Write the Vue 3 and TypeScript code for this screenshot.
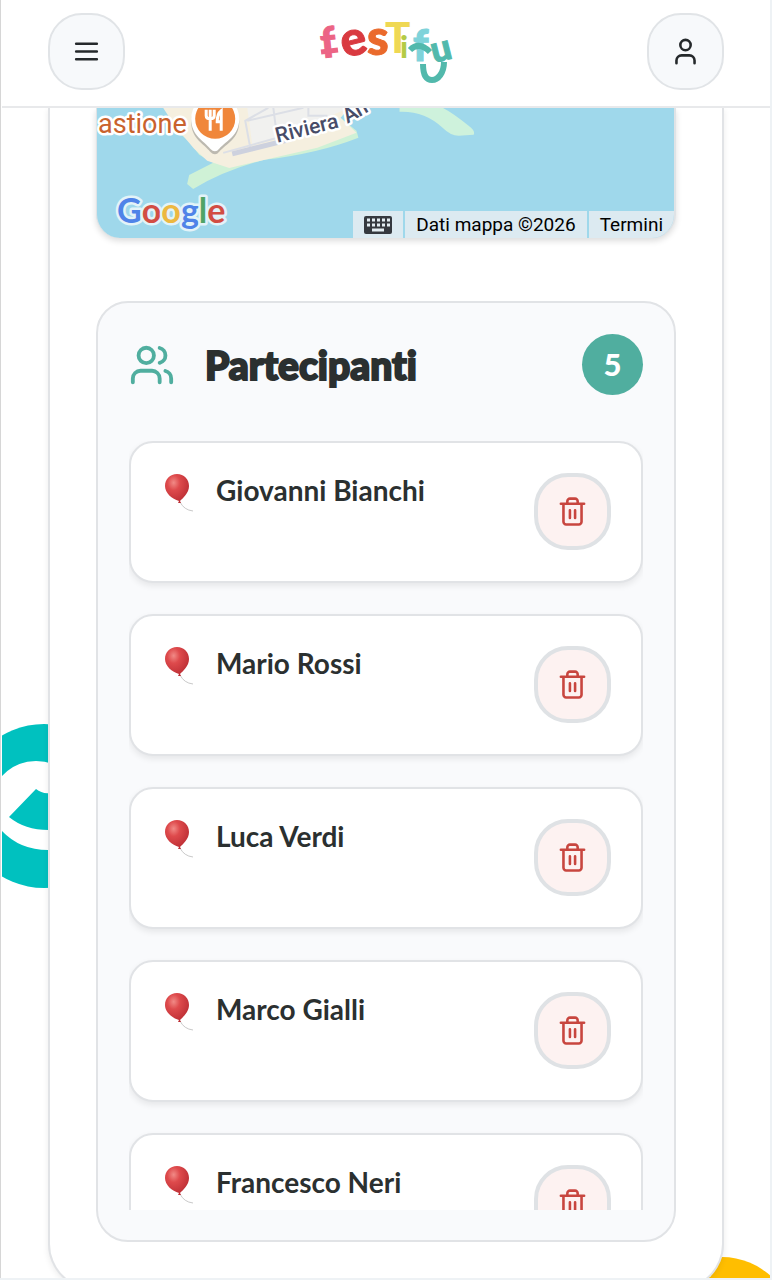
<script setup lang="ts">
import { ref } from 'vue'

interface Participant {
  id: number
  name: string
}

const participants = ref<Participant[]>([
  { id: 1, name: 'Giovanni Bianchi' },
  { id: 2, name: 'Mario Rossi' },
  { id: 3, name: 'Luca Verdi' },
  { id: 4, name: 'Marco Gialli' },
  { id: 5, name: 'Francesco Neri' },
])

function remove(id: number): void {
  participants.value = participants.value.filter((p) => p.id !== id)
}
</script>

<template>
  <div class="page">
    <header class="topbar">
      <button class="round-button" type="button" aria-label="Menu">
        <svg class="icon" viewBox="0 0 24 24"><path d="M4 6h16M4 12h16M4 18h16" /></svg>
      </button>
      <a class="logo" href="#" aria-label="Festify">
        <svg viewBox="0 0 136 66" width="136" height="66">
          <g class="logo-letters">
            <text x="3" y="38" font-size="42" fill="#ec6485" stroke="#ec6485" transform="rotate(-6 12 28)">f</text>
            <path d="M3 33L20 31" stroke="#ec6485" stroke-width="5" />
            <text x="23" y="36" font-size="48" fill="#d93a40" stroke="#d93a40" transform="rotate(-14 37 24)">e</text>
            <text x="49" y="36" font-size="49" fill="#ea6a2c" stroke="#ea6a2c">s</text>
            <text x="67" y="34" font-size="42" fill="#efd853">T</text>
            <text x="82" y="39" font-size="31" fill="#b4cb46">i</text>
            <text x="95" y="42" font-size="43" fill="#7fd3da" stroke="#7fd3da">f</text>
            <text x="113" y="42" font-size="36" fill="#52b9ac" stroke="#52b9ac" transform="rotate(-14 123 32)">u</text>
          </g>
          <path d="M92 31Q101 22 112 33" fill="none" stroke="#52b9ac" stroke-width="6" />
          <path d="M105 45c0 10 3 16 9 16s12-7 12-18" fill="none" stroke="#52b9ac" stroke-width="6" />
        </svg>
      </a>
      <button class="round-button" type="button" aria-label="Profilo">
        <svg class="icon" viewBox="0 0 24 24">
          <path d="M19 21v-2a4 4 0 0 0-4-4H9a4 4 0 0 0-4 4v2" />
          <circle cx="12" cy="7" r="4" />
        </svg>
      </button>
    </header>

    <main class="content">
      <svg class="decor decor-teal" viewBox="0 0 124 164" width="124" height="164" aria-hidden="true">
        <circle cx="42" cy="82" r="82" fill="#00c1bf" />
        <path d="M0 52Q14 37 34 37Q58 37 80 60V126H46Q18 126 0 107Z" fill="#fff" />
        <path d="M34 65L7 93Q24 107 50 106H70V69H48Q40 70 34 65Z" fill="#00c1bf" />
      </svg>
      <svg class="decor decor-yellow" viewBox="0 0 144 144" width="144" height="144" aria-hidden="true">
        <circle cx="72" cy="72" r="72" fill="#ffbe00" />
      </svg>

      <article class="event-card">
        <section class="map" aria-label="Mappa">
          <svg class="map-art" viewBox="0 0 576 130" preserveAspectRatio="xMinYMax slice">
            <path d="M68 0L75 10 82 25 92 34 102 47 116 55 92 67 90 76 96 81Q128 62 167 52Q220 46 261 30L259 23 243 10 252 0Z" fill="#cff1d6" />
            <path d="M66 0L75 14 86 28 97 41 110 53 132 60 172 51 220 40 259 25 243 10 252 0Z" fill="#f5efdf" />
            <path d="M150 0L155 37 198 24 247 2V0Z" fill="#f1f1ef" />
            <path d="M126 45L198 25M153 40L148 13 171 0M180 31L176 0M150 13L206 0M211 0V8H230" fill="none" stroke="#dcdfe6" stroke-width="2" />
            <path d="M135 46L195 31" fill="none" stroke="#cdd1de" stroke-width="5" />
            <path d="M302 0V4Q327 3 345 20Q353 28 361 28L376 27Q378 23 371 18Q355 5 345 0Z" fill="#cef2dc" />
            <path d="M94 11A24 24 0 0 1 142 11C142 28 129 33 122 41Q118 46 113 41C107 33 94 28 94 11Z" fill="#777" opacity=".45" transform="translate(0 3)" />
            <path d="M94 11A24 24 0 0 1 142 11C142 28 129 33 122 41Q118 46 113 41C107 33 94 28 94 11Z" fill="#fff" />
            <circle cx="118" cy="11" r="20" fill="#f0873b" />
            <path d="M109 2V8Q109 11 113 11T117 8V2M113 2V23M124 23V3Q120 6 120 14H124" fill="none" stroke="#fff" stroke-width="3" />
            <g class="map-label">
              <text x="1" y="25" font-size="27" fill="#c9622d">astione</text>
              <text x="180" y="35" font-size="21" fill="#484c68" font-weight="500" transform="rotate(-14 180 35)">Riviera</text>
              <text x="250" y="16" font-size="21" fill="#484c68" font-weight="500" transform="rotate(-30 250 16)">An</text>
            </g>
            <text class="google" x="20" y="115"><tspan fill="#4f83e8">G</tspan><tspan fill="#d24d43">o</tspan><tspan fill="#edb840">o</tspan><tspan fill="#4f83e8">g</tspan><tspan fill="#4fa467">l</tspan><tspan fill="#d24d43">e</tspan></text>
          </svg>
          <div class="map-credits">
            <button class="credit" type="button" aria-label="Scorciatoie da tastiera">
              <svg viewBox="0 0 28 18" width="28" height="18">
                <rect width="28" height="18" rx="2" fill="#35393f" />
                <path d="M3 4H26M3 9H26" stroke="#e3edf2" stroke-width="3" stroke-dasharray="3 2" />
                <path d="M8 14H20" stroke="#e3edf2" stroke-width="3" />
              </svg>
            </button>
            <span class="credit">Dati mappa ©2026</span>
            <a class="credit" href="#">Termini</a>
          </div>
        </section>

        <section class="panel">
          <div class="panel-head">
            <svg class="icon icon-users" viewBox="0 0 24 24">
              <path d="M16 21v-2a4 4 0 0 0-4-4H6a4 4 0 0 0-4 4v2" />
              <circle cx="9" cy="7" r="4" />
              <path d="M22 21v-2a4 4 0 0 0-3-3.87M16 3.13a4 4 0 0 1 0 7.75" />
            </svg>
            <h2>Partecipanti</h2>
            <span class="count">{{ participants.length }}</span>
          </div>
          <ul class="list">
            <li v-for="p in participants" :key="p.id" class="item">
              <svg class="balloon" viewBox="0 0 32 40" width="32" height="40" aria-hidden="true">
                <defs>
                  <radialGradient :id="'balloon-' + p.id" cx=".36" cy=".3" r=".75">
                    <stop offset="0" stop-color="#f18a86" />
                    <stop offset=".35" stop-color="#de4a4c" />
                    <stop offset="1" stop-color="#b92b32" />
                  </radialGradient>
                </defs>
                <path d="M18 29Q22 37 31 38" fill="none" stroke="#c9c9c9" stroke-width="1" />
                <path d="M15 1C22 1 27 6 27 13C27 20 21 25 18 28L19 30H16L17 28C10 26 3 20 3 13C3 6 8 1 15 1Z" :fill="`url(#balloon-${p.id})`" />
              </svg>
              <span class="name">{{ p.name }}</span>
              <button class="round-button delete" type="button" :aria-label="'Rimuovi ' + p.name" @click="remove(p.id)">
                <svg class="icon" viewBox="0 0 24 24">
                  <path d="M3 6h18M19 6v14c0 1-1 2-2 2H7c-1 0-2-1-2-2V6M8 6V4c0-1 1-2 2-2h4c1 0 2 1 2 2v2M10 11v6M14 11v6" />
                </svg>
              </button>
            </li>
          </ul>
        </section>
      </article>
    </main>
  </div>
</template>

<style>
body {
  margin: 0;
  background: #fff;
}
</style>

<style scoped>
.page {
  box-sizing: border-box;
  display: flex;
  flex-direction: column;
  height: 100vh;
  padding-left: 1px;
  border: solid #eef2f5;
  border-width: 0 2px 2px 0;
  box-shadow: inset 1px 0 #d6d6d6;
  color: #2b3030;
  font-family: Lato, "Noto Sans", sans-serif;
  font-variant-ligatures: none;
  overflow: hidden;
}

.topbar {
  display: flex;
  align-items: center;
  justify-content: space-between;
  flex: none;
  margin-left: 1px;
  padding: 13px 46px 16px;
  border-bottom: 2px solid #e8e9eb;
}

.round-button {
  box-sizing: border-box;
  display: grid;
  place-items: center;
  flex: none;
  width: 77px;
  height: 77px;
  padding: 0;
  border: 2px solid #e1e4e7;
  border-radius: 34px;
  background: #f7f9fb;
  color: #25292b;
  cursor: pointer;
}

.icon {
  width: 31px;
  height: 31px;
  fill: none;
  stroke: currentColor;
  stroke-width: 2;
  stroke-linecap: round;
  stroke-linejoin: round;
}

.logo {
  display: block;
  height: 66px;
}

.logo svg {
  overflow: visible;
}

.logo-letters {
  font-family: Lato, sans-serif;
  font-weight: 900;
}

.content {
  position: relative;
  flex: 1;
  min-height: 0;
  margin-left: 1px;
  padding: 0 46px;
  overflow: hidden auto;
  scrollbar-width: none;
}

.decor {
  position: absolute;
}

.decor-teal {
  left: 0;
  top: 616px;
}

.decor-yellow {
  right: -24px;
  top: 1149px;
}

.event-card {
  position: relative;
  display: flex;
  flex-direction: column;
  gap: 63px;
  padding: 0 46px 46px;
  border: solid #e1e3e6;
  border-width: 0 2px 2px;
  border-radius: 0 0 46px 46px;
  background: #fff;
  box-shadow: 0 2px 6px rgb(0 0 0 / 8%);
}

.map {
  position: relative;
  height: 130px;
  border: solid #dfe3e6;
  border-width: 0 2px 0 1px;
  border-radius: 0 0 24px 24px;
  background: #9fd8eb;
  box-shadow: 0 3px 6px rgb(0 0 0 / 14%);
  overflow: hidden;
}

.map-art {
  display: block;
  width: 100%;
  height: 130px;
}

.map-label {
  font-family: Roboto, sans-serif;
  paint-order: stroke;
  stroke: #fff;
  stroke-width: 5px;
  stroke-linejoin: round;
}

.google {
  font-family: Lato, sans-serif;
  font-size: 34px;
  font-weight: 700;
  paint-order: stroke;
  stroke: #e3f3f8;
  stroke-width: 5px;
  stroke-linejoin: round;
}

.map-credits {
  position: absolute;
  right: 0;
  bottom: 0;
  display: flex;
  gap: 2px;
}

.credit {
  display: flex;
  align-items: center;
  height: 27px;
  padding: 0 11px;
  border: 0;
  background: #dceaf1;
  color: #000;
  font: 19px/29px Roboto, sans-serif;
  text-decoration: none;
}

.panel {
  padding: 31px 31px 30px;
  border: 2px solid #e1e3e6;
  border-radius: 32px;
  background: #f9fafc;
}

.panel-head {
  display: flex;
  align-items: center;
  gap: 30px;
  margin-bottom: 46px;
}

.icon-users {
  width: 46px;
  height: 46px;
  color: #50ae9f;
}

h2 {
  flex: 1;
  margin: 0;
  font-size: 39px;
  font-weight: 900;
  line-height: 46px;
  -webkit-text-stroke: 2px currentColor;
  paint-order: stroke;
}

.count {
  width: 61px;
  height: 61px;
  border-radius: 50%;
  background: #50ae9f;
  color: #fff;
  font-size: 31px;
  font-weight: 900;
  line-height: 61px;
  text-align: center;
}

.list {
  display: flex;
  flex-direction: column;
  gap: 31px;
  max-height: 769px;
  margin: 0;
  padding: 0;
  list-style: none;
  overflow-y: auto;
  scrollbar-width: none;
}

.item {
  box-sizing: border-box;
  display: flex;
  align-items: flex-start;
  flex: none;
  gap: 22px;
  min-height: 142px;
  padding: 30px 30px 29px 31px;
  border: 2px solid #e1e3e6;
  border-radius: 24px;
  background: #fff;
  box-shadow: 0 3px 6px rgb(0 0 0 / 8%);
}

.balloon {
  flex: none;
}

.name {
  flex: 1;
  font-size: 28px;
  font-weight: 700;
  line-height: 35px;
}

.delete {
  border: 4px solid #dfe2e5;
  background: #fdf2f1;
  color: #c8463f;
}
</style>
